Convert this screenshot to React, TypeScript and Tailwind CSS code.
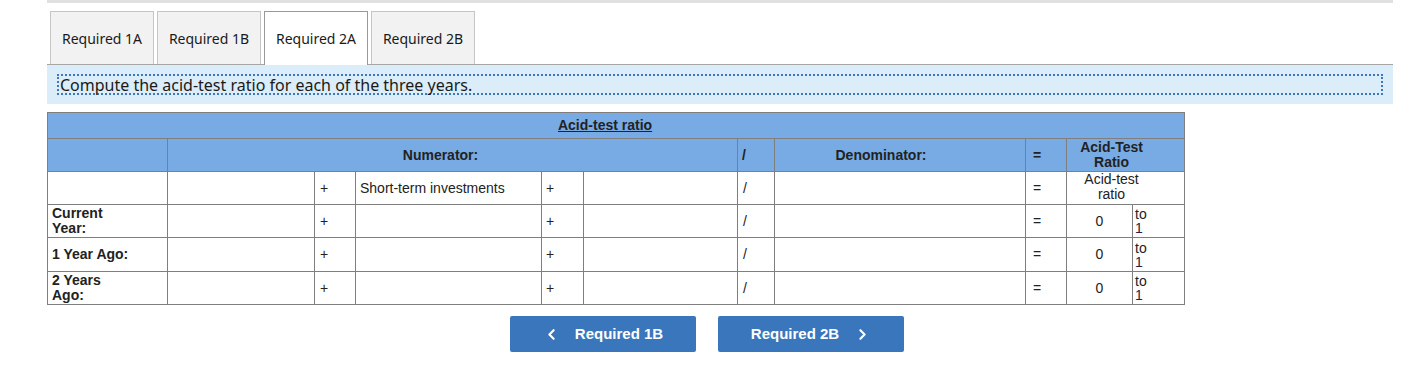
import { ChevronLeft, ChevronRight } from 'lucide-react';

const tabs = ['Required 1A', 'Required 1B', 'Required 2A', 'Required 2B'];

const rows = [
  { label: 'Current Year:', value: '0' },
  { label: '1 Year Ago:', value: '0' },
  { label: '2 Years Ago:', value: '0' },
];

const cell = 'border border-[#7f7f7f] p-0';

function Tabs() {
  return (
    <div className="mt-[8px] flex items-end gap-[3px] border-b border-[#a6a6a6] pl-[3px]">
      {tabs.map(t => {
        const active = t === 'Required 2A';
        return (
          <div
            key={t}
            className={
              active
                ? '-mb-px flex h-[54px] w-[104px] items-center justify-center border border-b-0 border-[#9a9a9a] bg-white pb-px text-[14px] text-[#1a1a1a]'
                : 'flex h-[53px] w-[104px] items-center justify-center border border-b-0 border-[#c6c6c6] bg-[#f2f2f2] text-[14px] text-[#1a1a1a]'
            }
          >
            {t}
          </div>
        );
      })}
    </div>
  );
}

export default function App() {
  return (
    <div className="min-h-[380px] bg-white font-['Liberation_Sans',Arial,sans-serif]">
      <div className="ml-[47px] w-[1346px]">
        {/* Top strip */}
        <div className="h-[3px] bg-[#e0e0e0]" />

        <div className="font-['Noto_Sans','DejaVu_Sans',sans-serif]">
          <Tabs />

          {/* Instruction band */}
          <div className="h-[39px] bg-[#dbedf9] pl-[10px] pr-[10px] pt-[9px]">
            <div className="flex h-[21px] items-center border-2 border-dotted border-[#3d78bd] pl-[1px] text-[16px] leading-none text-[#1a1a1a]">
              Compute the acid-test ratio for each of the three years.
            </div>
          </div>
        </div>

        {/* Acid-test table */}
        <table className="mt-[8px] w-[1137px] table-fixed border-collapse text-[14px] text-[#222]">
          <colgroup>
            <col className="w-[120px]" />
            <col className="w-[147px]" />
            <col className="w-[41px]" />
            <col className="w-[186px]" />
            <col className="w-[42px]" />
            <col className="w-[154px]" />
            <col className="w-[37px]" />
            <col className="w-[251px]" />
            <col className="w-[41px]" />
            <col className="w-[66px]" />
            <col className="w-[52px]" />
          </colgroup>
          <thead>
            <tr className="h-[26px] bg-[#78abe3]">
              <th colSpan={11} className={`${cell} pr-[22px] text-center font-bold`}>
                <span className="underline">Acid-test ratio</span>
              </th>
            </tr>
            <tr className="h-[33px] bg-[#78abe3] font-bold">
              <th className={cell} />
              <th colSpan={5} className={`${cell} pr-[24px] text-center`}>Numerator:</th>
              <th className={`${cell} pl-[4px] text-left`}>/</th>
              <th className={`${cell} pr-[38px] text-center`}>Denominator:</th>
              <th className={`${cell} pl-[7px] text-left`}>=</th>
              <th colSpan={2} className={`${cell} pr-[28px] text-center leading-[15px]`}>
                Acid-Test
                <br />
                Ratio
              </th>
            </tr>
          </thead>
          <tbody>
            <tr className="h-[33px]">
              <td className={cell} />
              <td className={cell} />
              <td className={`${cell} pl-[5px]`}>+</td>
              <td className={`${cell} pl-[4px]`}>Short-term investments</td>
              <td className={`${cell} pl-[4px]`}>+</td>
              <td className={cell} />
              <td className={`${cell} pl-[5px]`}>/</td>
              <td className={cell} />
              <td className={`${cell} pl-[7px]`}>=</td>
              <td colSpan={2} className={`${cell} pr-[28px] text-center align-top leading-[15px]`}>
                Acid-test
                <br />
                ratio
              </td>
            </tr>
            {rows.map((r, i) => (
              <tr key={r.label} className={i === 1 ? 'h-[34px]' : 'h-[33px]'}>
                <td className={`${cell} pl-[4px] pr-[32px] font-bold leading-[15px]`}>{r.label}</td>
                <td className={cell} />
                <td className={`${cell} pl-[5px]`}>+</td>
                <td className={cell} />
                <td className={`${cell} pl-[4px]`}>+</td>
                <td className={cell} />
                <td className={`${cell} pl-[5px]`}>/</td>
                <td className={cell} />
                <td className={`${cell} pl-[7px]`}>=</td>
                <td className={`${cell} text-center`}>{r.value}</td>
                <td className={`${cell} pl-[2px] leading-[14px]`}>
                  to
                  <br />
                  <span className="text-[#2a1d44]">1</span>
                </td>
              </tr>
            ))}
          </tbody>
        </table>

        {/* Navigation */}
        <div className="ml-[463px] mt-[11px] flex gap-[22px]">
          <button className="flex h-[36px] w-[186px] items-center justify-center gap-[15px] rounded-[2px] bg-[#3a76bc] text-[15px] font-bold text-white">
            <ChevronLeft size={17} strokeWidth={3} />
            Required 1B
          </button>
          <button className="flex h-[36px] w-[186px] items-center justify-center gap-[15px] rounded-[2px] bg-[#3a76bc] text-[15px] font-bold text-white">
            Required 2B
            <ChevronRight size={17} strokeWidth={3} />
          </button>
        </div>
      </div>
    </div>
  );
}
